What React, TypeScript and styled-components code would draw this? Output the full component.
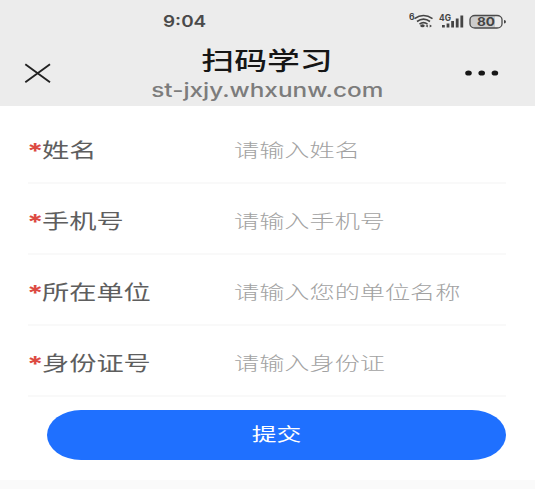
import React from 'react';
import styled, { createGlobalStyle } from 'styled-components';

const GlobalStyle = createGlobalStyle`
  * { box-sizing: border-box; }
  body {
    margin: 0;
    background: #fafafa;
    font-family: Inter, "Noto Sans CJK SC", sans-serif;
  }
`;

const Page = styled.div`
  width: 535px;
  height: 489px;
  display: flex;
  flex-direction: column;
  overflow: hidden;
  background: #fafafa;
`;

const Header = styled.header`
  height: 106px;
  flex: none;
  background: #ececec;
`;

const StatusBar = styled.div`
  height: 42px;
  display: flex;
  align-items: center;
  justify-content: space-between;
  padding: 2px 27px 0 163px;
`;

const Wide = styled.span<{ $size: number; $stretch: number; $weight?: number; $origin?: string }>`
  display: inline-block;
  white-space: nowrap;
  font-size: ${p => p.$size}px;
  font-weight: ${p => p.$weight ?? 400};
  line-height: 1.2;
  transform: scaleX(${p => p.$stretch});
  transform-origin: ${p => p.$origin ?? 'left'} center;
`;

const Clock = styled(Wide)`
  color: #4a4a4a;
`;

const StatusIcons = styled.svg`
  display: block;
  margin-bottom: 2px;
  font-family: Inter, sans-serif;
  font-weight: 700;
`;

const NavBar = styled.div`
  height: 64px;
  display: grid;
  grid-template-columns: 100px 1fr 100px;
  padding-right: 1px;
`;

const NavIcon = styled.svg`
  display: block;
  width: 100px;
  height: 64px;
`;

const Heading = styled.div`
  display: flex;
  flex-direction: column;
  align-items: center;
`;

const Title = styled(Wide)`
  height: 29px;
  margin-top: 5px;
  color: #161616;
`;

const Address = styled(Wide)`
  margin-top: 3px;
  color: #7c7c7c;
`;

const Form = styled.form`
  height: 374px;
  padding: 7px 29px 0 28px;
  background: #fff;
`;

const Field = styled.label`
  height: 71px;
  display: grid;
  grid-template-columns: 14px 192px 1fr;
  align-items: center;
  padding-top: 7px;
  border-bottom: 2px solid #f9f9f9;
`;

const Star = styled(Wide)`
  margin-left: -1px;
  padding-top: 1px;
  color: #dc4a42;
`;

const Label = styled(Wide)`
  color: #5e5e5e;
`;

const Hint = styled(Wide)`
  padding-bottom: 2px;
  color: #a2a2a2;
`;

const Submit = styled.button`
  display: flex;
  align-items: center;
  justify-content: center;
  width: 459px;
  height: 50px;
  margin: 13px 0 0 19px;
  padding: 0 0 1px;
  border: 0;
  border-radius: 34px / 25px;
  background: #1f70ff;
  color: #fff;
  font-family: inherit;
`;

const fields = [
  { label: '姓名', hint: '请输入姓名' },
  { label: '手机号', hint: '请输入手机号' },
  { label: '所在单位', hint: '请输入您的单位名称' },
  { label: '身份证号', hint: '请输入身份证' },
];

const signalBars = [
  { x: 33, height: 2.5 },
  { x: 37.6, height: 4 },
  { x: 42.2, height: 6.5 },
  { x: 46.8, height: 9 },
  { x: 51.4, height: 12 },
];

export default function App() {
  return (
    <Page>
      <GlobalStyle />
      <Header>
        <StatusBar>
          <Clock $size={15.5} $stretch={1.22} $weight={600}>9:04</Clock>
          <StatusIcons width="99" height="20" viewBox="0 0 99 20" fill="#444">
            <text x="0" y="8.5" fontSize="8.5">6</text>
            <g fill="none" stroke="#444" strokeWidth="1.6">
              <path d="M5.5 7.7Q14.5 1.3 23.5 7.7" />
              <path d="M8 10.5Q14.5 5.7 21 10.5" />
              <path d="M10.5 13.2Q14.5 10 18.5 13.2" />
            </g>
            <ellipse cx="13.5" cy="14.8" rx="2.2" ry="1.5" />
            <path d="M16.5 15l2.300-1.600v3.200zM23 15l-2.300-1.600v3.200z" />
            <text x="30" y="9.5" fontSize="9" textLength="12" lengthAdjust="spacingAndGlyphs">4G</text>
            {signalBars.map(b => (
              <rect key={b.x} x={b.x} y={16.5 - b.height} width="2.8" height={b.height} />
            ))}
            <path d="M66 5h20v12h-20q-5 0-5-3.500v-5q0-3.500 5-3.500z" fill="#ccc" />
            <rect x="61" y="4.5" width="32" height="12.5" rx="5" ry="4" fill="none" stroke="#4a4a4a" strokeWidth="1.3" />
            <path d="M95 9q2 .3 2 1.800t-2 1.800z" />
            <text x="68" y="15" fontSize="11.5" textLength="18" lengthAdjust="spacingAndGlyphs">80</text>
          </StatusIcons>
        </StatusBar>
        <NavBar>
          <NavIcon viewBox="0 0 100 64" fill="none" stroke="#222" strokeWidth="1.9">
            <path d="M25.3 22.3L50 40.3M50 22.3L25.3 40.3" />
          </NavIcon>
          <Heading>
            <Title $size={24.5} $stretch={1.34} $weight={500} $origin="center">扫码学习</Title>
            <Address $size={18.5} $stretch={1.315} $weight={500} $origin="center">st-jxjy.whxunw.com</Address>
          </Heading>
          <NavIcon viewBox="0 0 100 64" fill="#171717">
            <ellipse cx="34.5" cy="31" rx="3.3" ry="2.6" />
            <ellipse cx="47.7" cy="31" rx="3.3" ry="2.6" />
            <ellipse cx="60.9" cy="31" rx="3.3" ry="2.6" />
          </NavIcon>
        </NavBar>
      </Header>
      <Form onSubmit={e => e.preventDefault()}>
        {fields.map(f => (
          <Field key={f.label}>
            <Star $size={21} $stretch={1.4} $weight={700}>*</Star>
            <Label $size={20} $stretch={1.36}>{f.label}</Label>
            <Hint $size={18.5} $stretch={1.36} $weight={300}>{f.hint}</Hint>
          </Field>
        ))}
        <Submit type="submit">
          <Wide $size={18.5} $stretch={1.34} $weight={400} $origin="center">提交</Wide>
        </Submit>
      </Form>
    </Page>
  );
}
